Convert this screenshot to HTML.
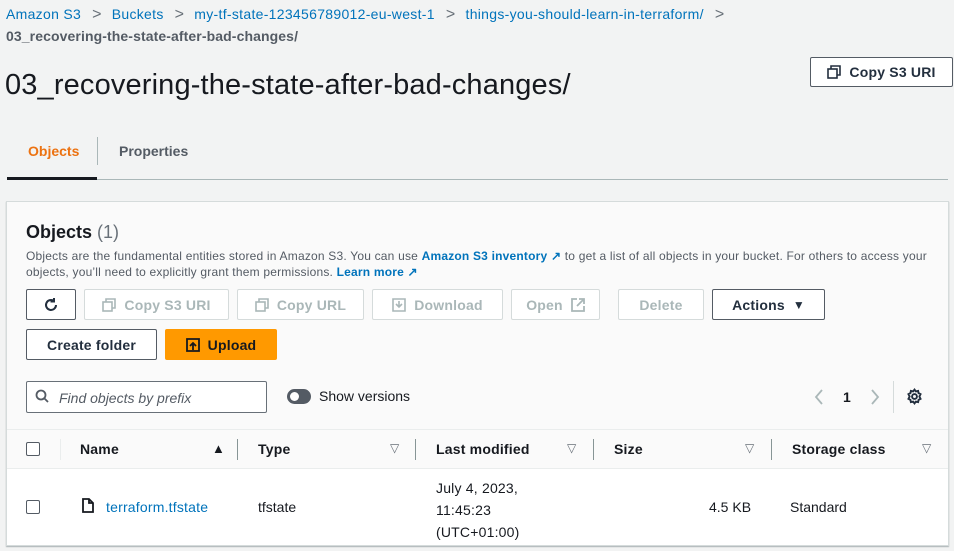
<!DOCTYPE html>
<html><head><meta charset="utf-8"><style>
*{box-sizing:border-box;margin:0;padding:0}
body{width:954px;height:551px;overflow:hidden;background:#f2f3f3;font-family:"Liberation Sans",sans-serif;font-size:14px;color:#16191f;position:relative}
.a{position:absolute;white-space:nowrap}
.lnk{color:#0073bb}
.btn{position:absolute;height:31px;border:1px solid #545b64;border-radius:2px;background:#fff;font-weight:bold;color:#232f3e;display:flex;align-items:center;justify-content:center;gap:8px;font-size:14px;letter-spacing:.2px}
.dis{border-color:#d5dbdb;color:#aab7b8;background:#fff}
.sep{position:absolute;width:1px;background:#d5dbdb}
.cb{position:absolute;width:14px;height:14px;border:1.5px solid #545b64;border-radius:2px;background:#fff}
.hd{font-weight:bold;color:#16191f;letter-spacing:.2px}
.tri{position:absolute;color:#687078;font-size:12px}
.chev{color:#687078;margin:0 10px 0 11px;font-size:16px}
</style></head><body>
<div class="a" style="left:6px;top:6px;font-size:14px;letter-spacing:.3px"><span class="lnk">Amazon S3</span><span class="chev">&gt;</span><span class="lnk">Buckets</span><span class="chev">&gt;</span><span class="lnk">my-tf-state-123456789012-eu-west-1</span><span class="chev">&gt;</span><span class="lnk">things-you-should-learn-in-terraform/</span><span class="chev">&gt;</span></div>
<div class="a" style="left:6px;top:28px;color:#545b64;font-weight:bold;letter-spacing:.1px">03_recovering-the-state-after-bad-changes/</div>
<div class="a" style="left:5px;top:69px;font-size:29px;letter-spacing:.15px;color:#16191f">03_recovering-the-state-after-bad-changes/</div>
<div class="btn" style="left:810px;top:57px;width:143px;height:30px"><svg width="14" height="14" viewBox="0 0 14 14" fill="none" stroke="#232f3e" stroke-width="1.6"><rect x="1" y="4" width="9" height="9"/><path d="M4 4V1h9v9h-3"/></svg>Copy S3 URI</div>
<div class="a" style="left:28px;top:143px;color:#ec7211;font-weight:bold">Objects</div>
<div class="sep" style="left:97px;top:137px;height:28px;background:#aab7b8"></div>
<div class="a" style="left:119px;top:143px;color:#545b64;font-weight:bold">Properties</div>
<div class="a" style="left:7px;top:179px;width:941px;height:1px;background:#aab7b8"></div>
<div class="a" style="left:7px;top:177px;width:90px;height:3px;background:#16191f"></div>

<div class="a" style="left:6px;top:201px;width:943px;height:345px;background:#fafafa;border:1px solid #d5dbdb;box-shadow:0 1px 1px rgba(0,28,36,.3)"></div>
<div class="a" style="left:26px;top:222px;font-size:18px;font-weight:bold">Objects <span style="font-weight:normal;color:#687078">(1)</span></div>
<div class="a" style="left:26px;top:248px;font-size:12px;color:#545b64;line-height:16px;letter-spacing:.2px">Objects are the fundamental entities stored in Amazon S3. You can use <b class="lnk">Amazon S3 inventory</b> <span class="lnk" style="font-weight:bold">&#x2197;</span> to get a list of all objects in your bucket. For others to access your<br>objects, you’ll need to explicitly grant them permissions. <b class="lnk">Learn more</b> <span class="lnk" style="font-weight:bold">&#x2197;</span></div>

<div class="btn" style="left:26px;top:289px;width:50px"><svg width="16" height="16" viewBox="0 0 16 16" fill="none" stroke="#232f3e" stroke-width="2"><path d="M13 8a5 5 0 1 1-2-4"/><path d="M11 1v3.5h-3.5"/></svg></div>
<div class="btn dis" style="left:84px;top:289px;width:145px"><svg width="14" height="14" viewBox="0 0 14 14" fill="none" stroke="#aab7b8" stroke-width="1.6"><rect x="1" y="4" width="9" height="9"/><path d="M4 4V1h9v9h-3"/></svg>Copy S3 URI</div>
<div class="btn dis" style="left:237px;top:289px;width:127px"><svg width="14" height="14" viewBox="0 0 14 14" fill="none" stroke="#aab7b8" stroke-width="1.6"><rect x="1" y="4" width="9" height="9"/><path d="M4 4V1h9v9h-3"/></svg>Copy URL</div>
<div class="btn dis" style="left:372px;top:289px;width:131px"><svg width="14" height="14" viewBox="0 0 14 14" fill="none" stroke="#aab7b8" stroke-width="1.6"><path d="M1 1h12v12H1z"/><path d="M7 3v6M4 6l3 3 3-3"/></svg>Download</div>
<div class="btn dis" style="left:511px;top:289px;width:89px">Open <svg width="14" height="14" viewBox="0 0 14 14" fill="none" stroke="#aab7b8" stroke-width="1.8"><path d="M6 1H1v12h12V8"/><path d="M8 1h5v5M13 1L6 8"/></svg></div>
<div class="btn dis" style="left:618px;top:289px;width:86px">Delete</div>
<div class="btn" style="left:712px;top:289px;width:113px">Actions <span style="font-size:12px">&#9660;</span></div>
<div class="btn" style="left:26px;top:329px;width:131px">Create folder</div>
<div class="btn" style="left:165px;top:329px;width:112px;background:#ff9900;border-color:#ff9900;color:#16191f"><svg width="14" height="14" viewBox="0 0 14 14" fill="none" stroke="#16191f" stroke-width="1.8"><path d="M1 1h12v12H1z"/><path d="M7 12V5M4 8l3-3 3 3"/></svg>Upload</div>

<div class="a" style="left:26px;top:381px;width:241px;height:32px;border:1px solid #687078;border-radius:2px;background:#fff"></div>
<svg class="a" style="left:35px;top:389px" width="14" height="14" viewBox="0 0 14 14" fill="none" stroke="#545b64" stroke-width="1.8"><circle cx="6" cy="6" r="4.5"/><path d="M9.5 9.5L13 13"/></svg>
<div class="a" style="left:59px;top:390px;color:#545b64;font-style:italic">Find objects by prefix</div>
<div class="a" style="left:287px;top:389px;width:24px;height:15px;border-radius:8px;background:#545b64"></div>
<div class="a" style="left:290px;top:392px;width:9px;height:9px;border-radius:50%;background:#fff"></div>
<div class="a" style="left:319px;top:388px">Show versions</div>
<svg class="a" style="left:814px;top:389px" width="10" height="16" viewBox="0 0 10 16" fill="none" stroke="#aab7b8" stroke-width="1.8"><path d="M8 1L2 8l6 7"/></svg>
<div class="a" style="left:843px;top:389px;font-weight:bold">1</div>
<svg class="a" style="left:870px;top:389px" width="10" height="16" viewBox="0 0 10 16" fill="none" stroke="#aab7b8" stroke-width="1.8"><path d="M2 1l6 7-6 7"/></svg>
<div class="sep" style="left:893px;top:381px;height:32px"></div>
<svg class="a" style="left:906px;top:388px" width="17" height="17" viewBox="0 0 16 16" fill="none" stroke="#232f3e" stroke-width="1.8"><circle cx="8" cy="8" r="2.3"/><path d="M8 1.5l1.3 1.7 2.1-.5.4 2.1 1.9 1L12.6 8l1.1 2.2-1.9 1-.4 2.1-2.1-.5L8 14.5l-1.3-1.7-2.1.5-.4-2.1-1.9-1L3.4 8 2.3 5.8l1.9-1 .4-2.1 2.1.5z"/></svg>

<div class="a" style="left:7px;top:429px;width:941px;height:1px;background:#eaeded"></div>
<div class="a" style="left:7px;top:430px;width:941px;height:39px;background:#fafafa;border-bottom:1px solid #eaeded"></div>
<div class="a" style="left:7px;top:469px;width:941px;height:76px;background:#fff"></div>
<div class="cb" style="left:26px;top:442px"></div>
<div class="sep" style="left:60px;top:439px;height:21px;background:#eaeded"></div>
<div class="a hd" style="left:80px;top:441px">Name</div>
<div class="a" style="left:212px;top:441px;font-size:13px">&#9650;</div>
<div class="sep" style="left:237px;top:439px;height:21px;background:#879596"></div>
<div class="a hd" style="left:258px;top:441px">Type</div>
<div class="tri" style="left:390px;top:441px">&#9661;</div>
<div class="sep" style="left:415px;top:439px;height:21px;background:#879596"></div>
<div class="a hd" style="left:436px;top:441px">Last modified</div>
<div class="tri" style="left:567px;top:441px">&#9661;</div>
<div class="sep" style="left:593px;top:439px;height:21px;background:#879596"></div>
<div class="a hd" style="left:614px;top:441px">Size</div>
<div class="tri" style="left:745px;top:441px">&#9661;</div>
<div class="sep" style="left:771px;top:439px;height:21px;background:#879596"></div>
<div class="a hd" style="left:792px;top:441px">Storage class</div>
<div class="tri" style="left:922px;top:441px">&#9661;</div>

<div class="cb" style="left:26px;top:500px"></div>
<svg class="a" style="left:82px;top:498px" width="12" height="15" viewBox="0 0 12 15" fill="none" stroke="#16191f" stroke-width="1.8"><path d="M1 1h6l4 4v9H1z"/><path d="M7 1v4h4"/></svg>
<div class="a lnk" style="left:106px;top:499px;letter-spacing:.2px">terraform.tfstate</div>
<div class="a" style="left:258px;top:499px">tfstate</div>
<div class="a" style="left:436px;top:477px;line-height:22px;letter-spacing:.2px">July 4, 2023,<br>11:45:23<br>(UTC+01:00)</div>
<div class="a" style="left:709px;top:499px">4.5 KB</div>
<div class="a" style="left:790px;top:499px">Standard</div>
</body></html>
